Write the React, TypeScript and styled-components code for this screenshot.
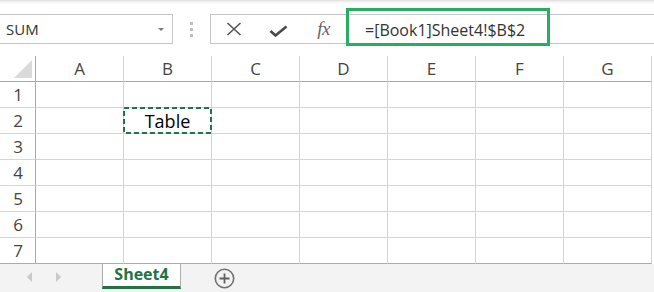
import React from "react";
import styled, { createGlobalStyle } from "styled-components";

const GlobalStyle = createGlobalStyle`
  html, body {
    margin: 0;
    padding: 0;
    background: #ffffff;
    overflow: hidden;
  }
  * {
    box-sizing: border-box;
  }
`;

const COLUMNS = ["A", "B", "C", "D", "E", "F", "G"];
const ROWS = [1, 2, 3, 4, 5, 6, 7];

const Window = styled.div`
  width: 654px;
  height: 292px;
  display: flex;
  flex-direction: column;
  overflow: hidden;
  font-family: "Open Sans", "Noto Sans", sans-serif;
  color: #444444;
`;

const FormulaBar = styled.div`
  height: 56px;
  flex: none;
  display: flex;
  align-items: flex-start;
  padding-top: 14px;
  background: linear-gradient(#dedede 0, #f4f4f4 2px, #ffffff 4px);
`;

const NameBox = styled.div`
  width: 173px;
  height: 30px;
  flex: none;
  display: flex;
  align-items: center;
  padding: 0 8px 0 6px;
  border: 1px solid #c6c6c6;
  border-left: none;
  font-size: 15px;
  color: #333333;
`;

const DropArrow = styled.span`
  margin-left: auto;
  width: 0;
  height: 0;
  border-left: 3px solid transparent;
  border-right: 3px solid transparent;
  border-top: 3px solid #7a7a7a;
`;

const Grip = styled.div`
  width: 37px;
  height: 30px;
  flex: none;
  display: flex;
  flex-direction: column;
  align-items: center;
  justify-content: center;
  gap: 3px;
  span {
    width: 3px;
    height: 3px;
    background: #bdbdbd;
  }
`;

const FormulaBox = styled.div`
  position: relative;
  flex: 1;
  height: 30px;
  display: flex;
  align-items: center;
  border: 1px solid #c6c6c6;
  border-right: none;
`;

const ActionButton = styled.div`
  width: 45px;
  height: 28px;
  flex: none;
  display: flex;
  align-items: center;
  justify-content: center;
  color: #555555;
`;

const FxLabel = styled.span`
  font-family: "Liberation Serif", "DejaVu Serif", serif;
  font-style: italic;
  font-size: 19px;
  color: #666666;
  letter-spacing: -0.5px;
`;

const FormulaInput = styled.div`
  flex: 1;
  padding-left: 19px;
  font-size: 16px;
  color: #333333;
  white-space: nowrap;
  line-height: 22px;
  margin-top: 1px;
`;

const Highlight = styled.div`
  position: absolute;
  left: 135px;
  top: -7px;
  width: 204px;
  height: 38px;
  border: 3px solid #27ae60;
  pointer-events: none;
`;

const Sheet = styled.div`
  display: grid;
  grid-template-columns: 36px repeat(7, 88px);
  grid-auto-rows: 26px;
  flex: none;
`;

const Corner = styled.div`
  display: flex;
  align-items: flex-end;
  justify-content: flex-end;
  padding: 0 3px 3px 0;
  border-right: 1px solid #ababab;
  border-bottom: 1px solid #ababab;
  &::after {
    content: "";
    width: 18px;
    height: 18px;
    background: #dadada;
    clip-path: polygon(100% 0, 100% 100%, 0 100%);
  }
`;

const ColHeader = styled.div`
  display: flex;
  align-items: center;
  justify-content: center;
  font-size: 17px;
  border-right: 1px solid #d4d4d4;
  border-bottom: 1px solid #ababab;
`;

const RowHeader = styled.div<{ $last?: boolean }>`
  display: flex;
  align-items: center;
  justify-content: center;
  padding-left: 1px;
  font-size: 17px;
  border-right: 1px solid #ababab;
  border-bottom: 1px solid ${(p) => (p.$last ? "#ababab" : "#d4d4d4")};
`;

const Cell = styled.div<{ $last?: boolean }>`
  position: relative;
  display: flex;
  align-items: center;
  justify-content: center;
  font-size: 18px;
  color: #000000;
  border-right: 1px solid #d4d4d4;
  border-bottom: 1px solid ${(p) => (p.$last ? "#ababab" : "#d4d4d4")};
`;

const Marquee = styled.svg`
  position: absolute;
  left: -1px;
  top: -1px;
  pointer-events: none;
`;

const TabBar = styled.div`
  flex: 1;
  display: flex;
  align-items: flex-start;
  background: #f3f3f3;
`;

const NavArrows = styled.div`
  width: 102px;
  height: 25px;
  flex: none;
  display: flex;
  align-items: center;
  padding-left: 27px;
  gap: 24px;
`;

const NavArrow = styled.span<{ $dir: "left" | "right" }>`
  width: 0;
  height: 0;
  border-top: 5px solid transparent;
  border-bottom: 5px solid transparent;
  ${(p) =>
    p.$dir === "left"
      ? "border-right: 5px solid #c9c9c9;"
      : "border-left: 5px solid #c9c9c9;"}
`;

const SheetTab = styled.div`
  width: 79px;
  height: 25px;
  flex: none;
  display: flex;
  align-items: center;
  justify-content: center;
  padding-bottom: 2px;
  background: #ffffff;
  border-left: 1px solid #ababab;
  border-right: 1px solid #ababab;
  border-bottom: 3px solid #217346;
  font-size: 16px;
  font-weight: 700;
  color: #217346;
`;

const AddSheet = styled.div`
  margin: 4px 0 0 33px;
  width: 21px;
  height: 21px;
  display: flex;
`;

const CloseIcon = () => (
  <svg width="16" height="14" viewBox="0 0 16 14">
    <path d="M1.5 1 L14.5 13 M14.5 1 L1.5 13" stroke="#555" strokeWidth="1.6" fill="none" />
  </svg>
);

const CheckIcon = () => (
  <svg width="19" height="12" viewBox="0 0 19 12" style={{ marginTop: 4 }}>
    <path d="M1.5 6 L6.5 10.5 L17.5 1.5" stroke="#4a4a4a" strokeWidth="2.6" fill="none" />
  </svg>
);

const PlusIcon = () => (
  <svg width="21" height="21" viewBox="0 0 21 21">
    <circle cx="10.5" cy="10.5" r="9.2" stroke="#707070" strokeWidth="1.6" fill="none" />
    <path d="M10.5 5.5 V15.5 M5.5 10.5 H15.5" stroke="#606060" strokeWidth="1.8" />
  </svg>
);

const App: React.FC = () => {
  return (
    <>
      <GlobalStyle />
      <Window>
        <FormulaBar>
          <NameBox>
            SUM
            <DropArrow />
          </NameBox>
          <Grip>
            <span />
            <span />
            <span />
          </Grip>
          <FormulaBox>
            <ActionButton>
              <CloseIcon />
            </ActionButton>
            <ActionButton>
              <CheckIcon />
            </ActionButton>
            <ActionButton>
              <FxLabel>fx</FxLabel>
            </ActionButton>
            <FormulaInput>=[Book1]Sheet4!$B$2</FormulaInput>
            <Highlight />
          </FormulaBox>
        </FormulaBar>

        <Sheet>
          <Corner />
          {COLUMNS.map((c) => (
            <ColHeader key={c}>{c}</ColHeader>
          ))}
          {ROWS.map((r) => (
            <React.Fragment key={r}>
              <RowHeader $last={r === 7}>{r}</RowHeader>
              {COLUMNS.map((c) => (
                <Cell key={c} $last={r === 7}>
                  {r === 2 && c === "B" && (
                    <>
                      Table
                      <Marquee width="89" height="27">
                        <rect
                          x="1"
                          y="1"
                          width="87"
                          height="25"
                          fill="none"
                          stroke="#217346"
                          strokeWidth="2"
                          strokeDasharray="5 3"
                        />
                      </Marquee>
                    </>
                  )}
                </Cell>
              ))}
            </React.Fragment>
          ))}
        </Sheet>

        <TabBar>
          <NavArrows>
            <NavArrow $dir="left" />
            <NavArrow $dir="right" />
          </NavArrows>
          <SheetTab>Sheet4</SheetTab>
          <AddSheet>
            <PlusIcon />
          </AddSheet>
        </TabBar>
      </Window>
    </>
  );
};

export default App;
